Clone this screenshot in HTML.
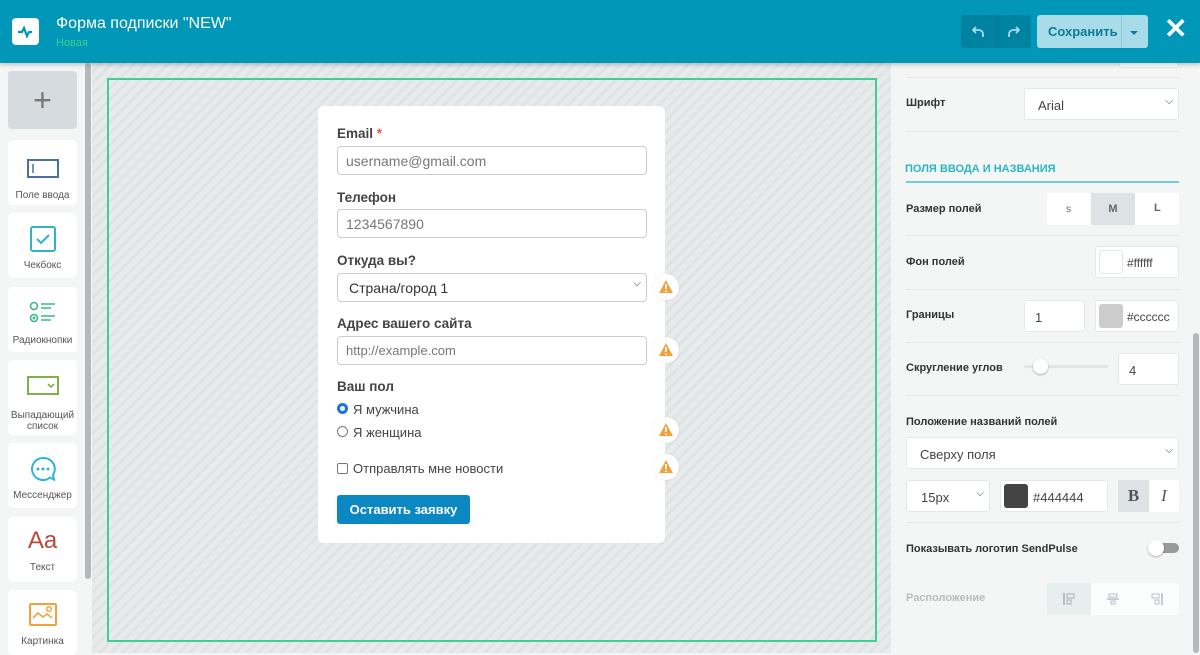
<!DOCTYPE html>
<html><head><meta charset="utf-8"><style>
*{box-sizing:border-box;margin:0;padding:0}
body{width:1200px;height:653px;overflow:hidden;font-family:"Liberation Sans",sans-serif;background:#f4f6f6;position:relative;color:#333}
.a{position:absolute}
#hdr{left:0;top:0;width:1200px;height:63px;background:#0097b8;box-shadow:0 2px 4px rgba(0,0,0,.2);z-index:5}
#left{left:0;top:63px;width:92px;height:590px;background:#f4f5f5}
.tool{position:absolute;left:8px;width:69px;background:#fff;border-radius:5px;text-align:center;font-size:10px;color:#555}
.tool svg{display:block;margin:0 auto}
#canvas{left:92px;top:63px;width:799px;height:590px;background:repeating-linear-gradient(135deg,#e8ebeb 0 5px,#dfe3e3 5px 8px)}
#card{left:318px;top:106px;width:347px;height:437px;background:#fff;border-radius:6px}
.lbl{position:absolute;left:19px;font-weight:bold;font-size:13.5px;color:#444}
.inp{position:absolute;left:19px;width:310px;height:29px;border:1px solid #ccc;border-radius:4px;font-size:14px;color:#777;padding:6px 8px}
.warn{position:absolute;width:26px;height:26px;border-radius:13px;background:#fff;box-shadow:0 0 2px rgba(0,0,0,.1)}
#right{left:891px;top:63px;width:309px;height:590px;background:#f4f6f6}
.rl{position:absolute;left:15px;font-size:11px;font-weight:bold;color:#333}
.hr{position:absolute;left:15px;width:273px;height:1px;background:#e3ebeb}
.bx{position:absolute;background:#fff;border:1px solid #e3e8e8;border-radius:3px;font-size:13px;color:#444}
</style></head><body>
<div id="hdr" class="a">
 <div class="a" style="left:12px;top:18px;width:27px;height:27px;background:#fff;border-radius:4px"><svg width="27" height="27"><path d="M6 14h4l2-4 3 8 2-4h3" stroke="#0097b8" stroke-width="2.2" fill="none"/></svg></div>
 <div class="a" style="left:56px;top:15px;font-size:16px;color:#fff">Форма подписки "NEW"</div>
 <div class="a" style="left:56px;top:37px;font-size:11px;color:#3ecf8e">Новая</div>
 <div class="a" style="left:961px;top:15px;width:70px;height:33px;background:#0083a0;border-radius:3px"></div>
 <div class="a" style="left:996px;top:15px;width:1px;height:33px;background:#00718b"></div>
 <svg class="a" style="left:972px;top:24px" width="14" height="14"><path d="M4 3L1 6l3 3M1 6h6a4 4 0 0 1 4 4v3" stroke="#a8dce8" stroke-width="1.8" fill="none"/></svg>
 <svg class="a" style="left:1006px;top:24px" width="14" height="14"><path d="M10 3l3 3-3 3M13 6H7a4 4 0 0 0-4 4v3" stroke="#a8dce8" stroke-width="1.8" fill="none"/></svg>
 <div class="a" style="left:1037px;top:15px;width:111px;height:33px;background:#a8dce8;border-radius:3px"></div>
 <div class="a" style="left:1121px;top:15px;width:1px;height:33px;background:#8cc9d7"></div>
 <div class="a" style="left:1048px;top:24px;font-size:13px;font-weight:bold;color:#0b7c97">Сохранить</div>
 <div class="a" style="left:1130px;top:31px;border:4px solid transparent;border-top-color:#0b7c97"></div>
 <div class="a" style="left:1164px;top:12px;font-size:28px;font-weight:bold;color:#fff">✕</div>
</div>
<div id="left" class="a">
 <div class="a" style="left:8px;top:8px;width:69px;height:58px;background:#d6dbe0;border-radius:4px;text-align:center;font-size:32px;color:#777;line-height:58px">+</div>
 <div class="tool" style="top:77px;height:65px"><svg width="34" height="34" style="margin-top:12px"><rect x="2" y="8" width="30" height="17" stroke="#4a6fa0" stroke-width="2" fill="none"/><path d="M7 12v9" stroke="#4a6fa0" stroke-width="1.5"/></svg><div style="margin-top:4px">Поле ввода</div></div>
 <div class="tool" style="top:150px;height:65px"><svg width="28" height="28" style="margin-top:12px"><rect x="2" y="2" width="24" height="24" rx="2" stroke="#2cb4c9" stroke-width="2" fill="none"/><path d="M8 14l4 4 8-8" stroke="#2cb4c9" stroke-width="2" fill="none"/></svg><div style="margin-top:7px">Чекбокс</div></div>
 <div class="tool" style="top:224px;height:65px"><svg width="30" height="30" style="margin-top:10px"><circle cx="6" cy="9" r="3.5" stroke="#3cb88a" stroke-width="1.6" fill="none"/><circle cx="6" cy="21" r="3.5" stroke="#3cb88a" stroke-width="1.6" fill="none"/><circle cx="6" cy="21" r="1.5" fill="#3cb88a"/><path d="M13 7h14M13 11h10M13 19h14M13 23h10" stroke="#3cb88a" stroke-width="1.6"/></svg><div style="margin-top:8px">Радиокнопки</div></div>
 <div class="tool" style="top:297px;height:75px"><svg width="34" height="24" style="margin-top:14px"><rect x="2" y="3" width="30" height="17" stroke="#7fb04c" stroke-width="2" fill="none"/><path d="M22 10l3 3 3-3" stroke="#7fb04c" stroke-width="1.6" fill="none"/></svg><div style="margin-top:12px;line-height:11px">Выпадающий<br>список</div></div>
 <div class="tool" style="top:380px;height:65px"><svg width="28" height="28" style="margin-top:12px"><path d="M14 3a11 11 0 1 0 7 19.5l4 2-1-4.5A11 11 0 0 0 14 3z" stroke="#2cb4e0" stroke-width="2" fill="none"/><circle cx="9" cy="14" r="1.5" fill="#2cb4e0"/><circle cx="14" cy="14" r="1.5" fill="#2cb4e0"/><circle cx="19" cy="14" r="1.5" fill="#2cb4e0"/></svg><div style="margin-top:7px">Мессенджер</div></div>
 <div class="tool" style="top:454px;height:65px"><div style="margin-top:10px;font-size:24px;color:#b9483d">Aa</div><div style="margin-top:7px">Текст</div></div>
 <div class="tool" style="top:527px;height:65px"><svg width="30" height="26" style="margin-top:12px"><rect x="2" y="2" width="26" height="21" rx="1" stroke="#f2a23a" stroke-width="2" fill="none"/><path d="M5 16l5-5 5 4 4-3 5 4" stroke="#f2a23a" stroke-width="1.6" fill="none"/><circle cx="21" cy="7" r="2.3" stroke="#f2a23a" stroke-width="1.5" fill="none"/></svg><div style="margin-top:8px">Картинка</div></div>
 <div class="a" style="left:85px;top:0;width:6px;height:516px;background:#b5b9bb;border-radius:3px"></div>
</div>
<div id="canvas" class="a"></div>
<div class="a" style="left:107px;top:78px;width:770px;height:564px;border:2px solid #3fcf8e"></div>
<div id="card" class="a">
 <div class="lbl" style="top:20px">Email <span style="color:#e54">*</span></div>
 <div class="inp" style="top:40px">username@gmail.com</div>
 <div class="lbl" style="top:84px">Телефон</div>
 <div class="inp" style="top:103px">1234567890</div>
 <div class="lbl" style="top:147px">Откуда вы?</div>
 <div class="inp" style="top:167px;color:#333;padding-left:11px">Страна/город 1<span style="position:absolute;right:5px;top:4px;font-size:10px">⌵</span></div>
 <div class="lbl" style="top:210px">Адрес вашего сайта</div>
 <div class="inp" style="top:230px;font-size:13px">http://example.com</div>
 <div class="lbl" style="top:273px">Ваш пол</div>
 <div class="a" style="left:19px;top:297px;width:11px;height:11px;border-radius:6px;border:3px solid #1a73e8"></div>
 <div class="a" style="left:35px;top:296px;font-size:13px;color:#444">Я мужчина</div>
 <div class="a" style="left:19px;top:320px;width:11px;height:11px;border-radius:6px;border:1px solid #777"></div>
 <div class="a" style="left:35px;top:319px;font-size:13px;color:#444">Я женщина</div>
 <div class="a" style="left:19px;top:357px;width:11px;height:11px;border-radius:2px;border:1px solid #777"></div>
 <div class="a" style="left:35px;top:355px;font-size:13px;color:#444">Отправлять мне новости</div>
 <div class="a" style="left:19px;top:389px;width:133px;height:29px;background:#0b87c2;border-radius:3px;color:#fff;font-weight:bold;font-size:13px;text-align:center;line-height:29px">Оставить заявку</div>
</div>
<div class="warn a" style="left:653px;top:274px"><svg width="26" height="26"><path d="M13 6l7 13H6z" fill="#f2a23a"/><path d="M13 10v5M13 16.5v1.5" stroke="#fff" stroke-width="1.8"/></svg></div>
<div class="warn a" style="left:653px;top:337px"><svg width="26" height="26"><path d="M13 6l7 13H6z" fill="#f2a23a"/><path d="M13 10v5M13 16.5v1.5" stroke="#fff" stroke-width="1.8"/></svg></div>
<div class="warn a" style="left:653px;top:417px"><svg width="26" height="26"><path d="M13 6l7 13H6z" fill="#f2a23a"/><path d="M13 10v5M13 16.5v1.5" stroke="#fff" stroke-width="1.8"/></svg></div>
<div class="warn a" style="left:653px;top:454px"><svg width="26" height="26"><path d="M13 6l7 13H6z" fill="#f2a23a"/><path d="M13 10v5M13 16.5v1.5" stroke="#fff" stroke-width="1.8"/></svg></div>
<div id="right" class="a">
 <div class="bx" style="left:228px;top:-10px;width:60px;height:15px"></div>
 <div class="hr" style="top:14px"></div>
 <div class="rl" style="top:34px">Шрифт</div>
 <div class="bx" style="left:133px;top:25px;width:155px;height:32px;padding:9px 13px">Arial<span style="position:absolute;right:5px;top:7px;font-size:10px">⌵</span></div>
 <div class="hr" style="top:68px"></div>
 <div class="a" style="left:14px;top:100px;font-size:11px;font-weight:bold;color:#2bb5c8">ПОЛЯ ВВОДА И НАЗВАНИЯ</div>
 <div class="a" style="left:15px;top:118px;width:273px;height:2px;background:#6ccfdc"></div>
 <div class="rl" style="top:140px">Размер полей</div>
 <div class="bx" style="left:156px;top:130px;width:132px;height:32px;border:none;font-size:11px;font-weight:bold;color:#666"><span class="a" style="left:19px;top:11px;font-weight:normal;font-size:10px">s</span><div class="a" style="left:44px;top:0;width:44px;height:32px;background:#dde3e5;text-align:center;line-height:32px">M</div><span class="a" style="left:107px;top:9px">L</span></div>
 <div class="hr" style="top:172px"></div>
 <div class="rl" style="top:193px">Фон полей</div>
 <div class="bx" style="left:204px;top:183px;width:84px;height:32px"><div class="a" style="left:3px;top:3px;width:24px;height:24px;border:1px solid #e6e6e6;border-radius:3px"></div><span class="a" style="left:31px;top:9px;font-size:12px">#ffffff</span></div>
 <div class="hr" style="top:226px"></div>
 <div class="rl" style="top:246px">Границы</div>
 <div class="bx" style="left:133px;top:237px;width:61px;height:32px;padding:9px 10px">1</div>
 <div class="bx" style="left:204px;top:237px;width:84px;height:32px"><div class="a" style="left:3px;top:3px;width:24px;height:24px;background:#ccc;border-radius:3px"></div><span class="a" style="left:31px;top:9px;font-size:12px">#cccccc</span></div>
 <div class="hr" style="top:279px"></div>
 <div class="rl" style="top:299px">Скругление углов</div>
 <div class="a" style="left:133px;top:302px;width:84px;height:3px;background:#e3e6e6;border-radius:2px"></div>
 <div class="a" style="left:142px;top:296px;width:15px;height:15px;background:#fff;border-radius:8px;box-shadow:0 1px 2px rgba(0,0,0,.3)"></div>
 <div class="bx" style="left:227px;top:290px;width:61px;height:32px;padding:9px 10px">4</div>
 <div class="hr" style="top:332px"></div>
 <div class="rl" style="top:353px">Положение названий полей</div>
 <div class="bx" style="left:15px;top:374px;width:273px;height:32px;padding:9px 13px">Сверху поля<span style="position:absolute;right:5px;top:7px;font-size:10px">⌵</span></div>
 <div class="bx" style="left:15px;top:417px;width:84px;height:32px;padding:9px 14px">15px<span style="position:absolute;right:5px;top:7px;font-size:10px">⌵</span></div>
 <div class="bx" style="left:109px;top:417px;width:108px;height:32px"><div class="a" style="left:3px;top:3px;width:24px;height:24px;background:#444;border-radius:3px"></div><span class="a" style="left:32px;top:9px">#444444</span></div>
 <div class="a" style="left:227px;top:417px;width:61px;height:32px;background:#fff;border-radius:3px"><div class="a" style="left:0;top:0;width:31px;height:32px;background:#dde3e5;text-align:center;line-height:32px;font-family:'Liberation Serif',serif;font-size:17px;font-weight:bold;color:#555">B</div><div class="a" style="left:31px;top:0;width:30px;height:32px;text-align:center;line-height:32px;font-family:'Liberation Serif',serif;font-size:17px;font-style:italic;color:#555">I</div></div>
 <div class="hr" style="top:459px"></div>
 <div class="rl" style="top:480px">Показывать логотип SendPulse</div>
 <div class="a" style="left:258px;top:480px;width:30px;height:10px;background:#999;border-radius:5px"></div>
 <div class="a" style="left:257px;top:477px;width:16px;height:16px;background:#fff;border-radius:8px;box-shadow:0 1px 2px rgba(0,0,0,.3)"></div>
 <div class="rl" style="top:529px;color:#bbb">Расположение</div>
 <div class="a" style="left:156px;top:520px;width:132px;height:32px;background:#fbfcfc;border-radius:3px"><div class="a" style="left:0;top:0;width:44px;height:32px;background:#e8eded"></div>
  <svg class="a" style="left:15px;top:9px" width="14" height="14"><path d="M2 1v12" stroke="#aab" stroke-width="1.5"/><rect x="5" y="2" width="7" height="4" stroke="#aab" fill="none"/><rect x="5" y="8" width="4" height="4" stroke="#aab" fill="none"/></svg>
  <svg class="a" style="left:59px;top:9px" width="14" height="14"><path d="M1 7h12" stroke="#bbc" stroke-width="1.5"/><rect x="3" y="2" width="8" height="3" stroke="#bbc" fill="none"/><rect x="5" y="9" width="4" height="3" stroke="#bbc" fill="none"/></svg>
  <svg class="a" style="left:103px;top:9px" width="14" height="14"><path d="M12 1v12" stroke="#bbc" stroke-width="1.5"/><rect x="2" y="2" width="7" height="4" stroke="#bbc" fill="none"/><rect x="5" y="8" width="4" height="4" stroke="#bbc" fill="none"/></svg>
 </div>
 <div class="a" style="left:302px;top:270px;width:6px;height:320px;background:#b5b9bb;border-radius:3px"></div>
</div>
</body></html>
